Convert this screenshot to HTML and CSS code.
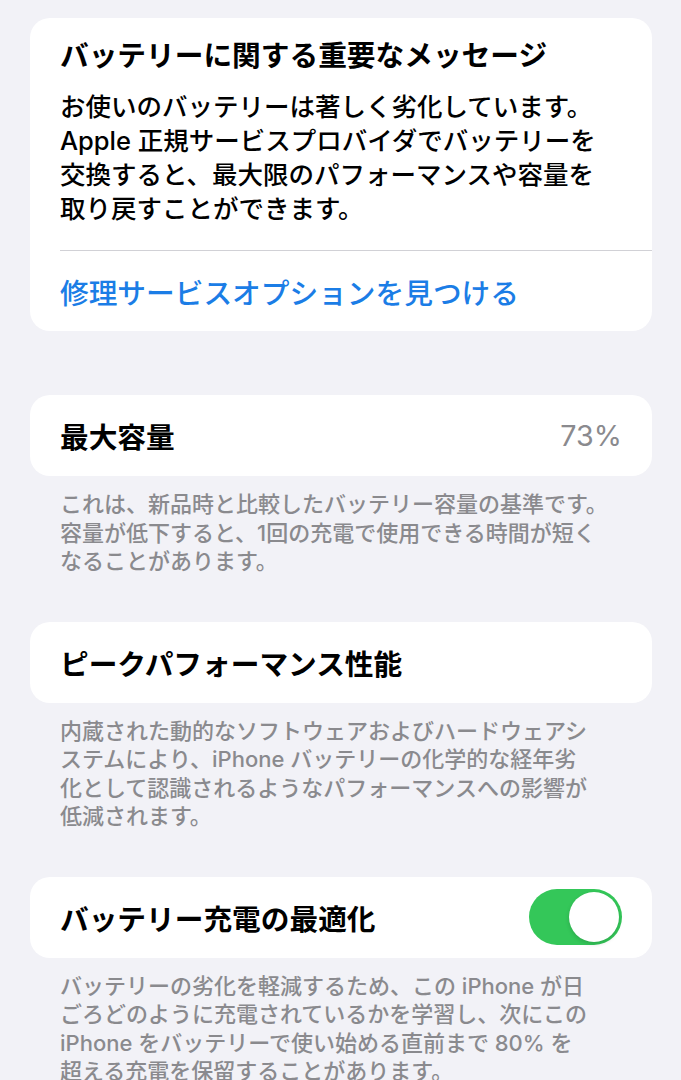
FILE: index.html
```html
<!DOCTYPE html>
<html lang="ja">
<head>
    <meta charset="UTF-8">
    <meta name="viewport" content="width=device-width, initial-scale=1.0">
    <title>バッテリーの状態と充電</title>
    <link rel="stylesheet" href="styles.css">
</head>
<body>
    <div class="page">
        <div class="group">
            <div class="card">
                <div class="message">
                    <h2>バッテリーに関する重要なメッセージ</h2>
                    <p>お使いのバッテリーは著しく劣化しています。<br>Apple 正規サービスプロバイダでバッテリーを<br>交換すると、最大限のパフォーマンスや容量を<br>取り戻すことができます。</p>
                </div>
                <a href="#" class="row link">修理サービスオプションを見つける</a>
            </div>
        </div>

        <div class="group">
            <div class="card">
                <div class="row">
                    <span class="label">最大容量</span>
                    <span class="value">73%</span>
                </div>
            </div>
            <p class="footer">これは、新品時と比較したバッテリー容量の基準です。<br>容量が低下すると、1回の充電で使用できる時間が短く<br>なることがあります。</p>
        </div>

        <div class="group">
            <div class="card">
                <div class="row">
                    <span class="label">ピークパフォーマンス性能</span>
                </div>
            </div>
            <p class="footer">内蔵された動的なソフトウェアおよびハードウェアシ<br>ステムにより、iPhone バッテリーの化学的な経年劣<br>化として認識されるようなパフォーマンスへの影響が<br>低減されます。</p>
        </div>

        <div class="group">
            <div class="card">
                <div class="row">
                    <span class="label">バッテリー充電の最適化</span>
                    <label class="switch">
                        <input type="checkbox" checked>
                        <span class="knob"></span>
                    </label>
                </div>
            </div>
            <p class="footer">バッテリーの劣化を軽減するため、この iPhone が日<br>ごろどのように充電されているかを学習し、次にこの<br>iPhone をバッテリーで使い始める直前まで 80% を<br>超える充電を保留することがあります。</p>
        </div>
    </div>
</body>
</html>
```

FILE: styles.css
```css
/* Ajustes - bateria */
body {
    font-family: 'Inter', 'Noto Sans CJK JP', sans-serif;
    background-color: #f2f2f7;
    color: #000;
    margin: 0;
    padding: 0;
}

.page {
    padding: 18px 29px 0 30px;
}

.group {
    margin-bottom: 46px;
}

.group:first-child {
    margin-bottom: 64px;
}

.card {
    background-color: #fff;
    border-radius: 20px;
    overflow: hidden;
}

.message {
    padding: 20px 30px 24px 0;
    border-bottom: 1px solid #d1d1d6;
    margin-left: 30px;
}

.message h2 {
    font-size: 28.7px;
    font-weight: 700;
    line-height: 36px;
    margin: 0 0 16px;
}

.message p {
    font-size: 25.5px;
    font-weight: 500;
    line-height: 34px;
    margin: 0;
}

.row {
    display: flex;
    justify-content: space-between;
    align-items: center;
    height: 81px;
    padding: 0 30px;
    font-size: 28.7px;
}

.link {
    height: 80px;
    color: #1b7de6;
    font-weight: 500;
    text-decoration: none;
}

.label {
    font-weight: 600;
}

.value {
    color: #8a8a8e;
}

.footer {
    margin: 14px 0 0;
    padding: 0 30px;
    font-size: 22px;
    font-weight: 500;
    line-height: 28.5px;
    color: #8a8a8e;
}

.switch {
    position: relative;
    display: block;
    width: 93px;
    height: 56px;
}

.switch input {
    display: none;
}

.knob {
    position: absolute;
    inset: 0;
    border-radius: 28px;
    background-color: #34c759;
}

.knob::after {
    content: "";
    position: absolute;
    top: 3px;
    right: 3px;
    width: 50px;
    height: 50px;
    border-radius: 50%;
    background-color: #fff;
    box-shadow: 0 2px 4px rgba(0, 0, 0, 0.15);
}
```
